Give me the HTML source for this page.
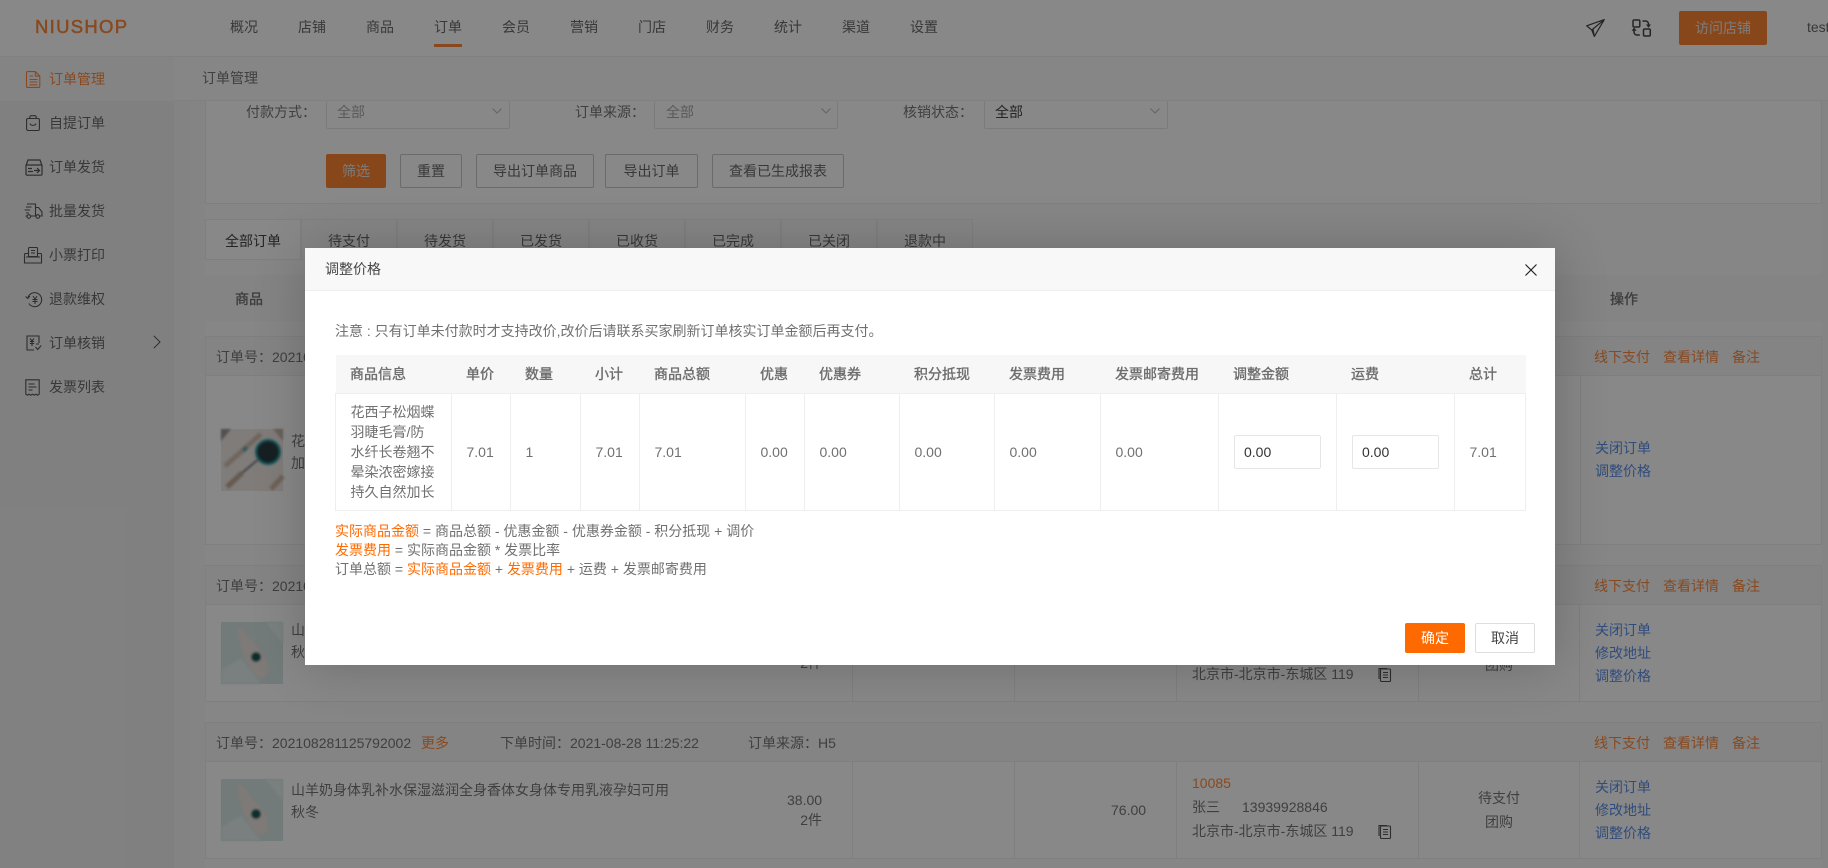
<!DOCTYPE html>
<html lang="zh">
<head>
<meta charset="utf-8">
<title>订单管理</title>
<style>
*{box-sizing:border-box}
html,body{margin:0;padding:0;width:1828px;height:868px;overflow:hidden;background:#fff}
body{position:relative;font-family:"Liberation Sans","Noto Sans CJK SC",sans-serif;font-size:14px;color:#777}
.a{position:absolute}
.t{position:absolute;line-height:20px;height:20px;white-space:nowrap;color:#777}
.c{font-family:"Noto Sans CJK TC",sans-serif}
.nav{top:17px;color:#6a6a6a}
.side{left:49px;color:#6a6a6a}
.sel{position:absolute;top:90px;height:39px;width:184px;border:1px solid #e6e6e6;border-radius:2px;background:#fff}
.btn{position:absolute;top:154px;height:34px;line-height:32px;text-align:center;border:1px solid #c9c9c9;border-radius:2px;color:#6a6a6a;background:#fff}
.tab{position:absolute;top:219px;height:41px;width:96px;line-height:42px;text-align:center;border:1px solid #eee;margin-left:-1px;background:#f9f9f9;color:#6a6a6a}
.ord{position:absolute;left:205px;width:1617px;border:1px solid #eee;background:#fff}
.ordh{position:absolute;left:205px;width:1617px;height:40px;background:#f8f8f8;border:1px solid #eee}
.v{position:absolute;width:1px;background:#eee}
.or{color:#ff8a3c}
.t.or{color:#ff8a3c}
.t.bl{color:#5b8fe8}
#md .or{color:#ff6a00}
#ov{position:absolute;left:0;top:0;width:1828px;height:868px;background:rgba(0,0,0,.467)}
#md{position:absolute;left:305px;top:248px;width:1250px;height:417px;background:#fff;box-shadow:1px 1px 50px rgba(0,0,0,.2)}
#mh{position:absolute;left:0;top:0;width:1250px;height:43px;background:#f8f8f8;border-bottom:1px solid #eee}
table{position:absolute;left:30px;top:107px;border-collapse:collapse;table-layout:fixed;width:1190px;color:#707070}
th{height:38px;background:#f7f7f7;text-align:left;padding:0 0 0 14.5px;font-weight:400;-webkit-text-stroke:.35px #666;white-space:nowrap}
td{height:117px;border:1px solid #eee;padding:0 0 0 14.5px;line-height:20px;vertical-align:middle;white-space:nowrap}
.ipt{width:87px;height:34px;margin-left:.5px;border:1px solid #e6e6e6;border-radius:2px;line-height:32px;padding-left:9px;color:#333}
svg{position:absolute;overflow:visible}
</style>
</head>
<body>
<!-- top nav -->
<div class="a" style="left:0;top:0;width:1828px;height:57px;background:#fff;border-bottom:1px solid #f1f1f1"></div>
<div class="t" style="left:35px;top:17px;font-size:18.500px;letter-spacing:1.300px;color:#ff8a3c;-webkit-text-stroke:.5px #ff8a3c">NIUSHOP</div>
<div class="t nav" style="left:230px">概况</div>
<div class="t nav" style="left:298px">店铺</div>
<div class="t nav" style="left:366px">商品</div>
<div class="t nav" style="left:434px">订单</div>
<div class="t nav" style="left:502px">会员</div>
<div class="t nav" style="left:570px">营销</div>
<div class="t nav" style="left:638px">门店</div>
<div class="t nav" style="left:706px">财务</div>
<div class="t nav" style="left:774px">统计</div>
<div class="t nav" style="left:842px">渠道</div>
<div class="t nav" style="left:910px">设置</div>
<div class="a" style="left:434px;top:44px;width:28px;height:3px;background:#ff8a3c"></div>
<svg style="left:1586px;top:19px" width="19" height="18" viewBox="0 0 19 18" fill="none" stroke="#444" stroke-width="1.200" stroke-linejoin="round"><path d="M18.300.6 .7 6.800 5.800 11 8.300 17.400 18.300.6ZM18.300.6 5.800 11M8.300 17.400 7 10.200"/></svg>
<svg style="left:1632px;top:19px" width="19" height="18" viewBox="0 0 19 18" fill="none" stroke="#444" stroke-width="1.500"><rect x="1" y="1" width="6.800" height="7" rx="1.200"/><rect x="11.500" y="10" width="6.800" height="7" rx="1.200"/><path d="M10.500 2h3a3 3 0 0 1 3 3v2M7.800 16H5a3 3 0 0 1-3-3v-2"/><path d="M14 5.500h5l-2.500 3.300ZM-.4 11.800h5l-2.500-3.300Z" fill="#444" stroke="none"/></svg>
<div class="a" style="left:1679px;top:11px;width:88px;height:34px;line-height:34px;text-align:center;background:#ff8533;border-radius:2px;color:#e8e8e8">访问店铺</div>
<div class="t" style="left:1807px;top:17px;color:#6a6a6a">test</div>

<!-- sidebar -->
<div class="a" style="left:0;top:57px;width:174px;height:811px;background:#f1f1f1"></div>
<div class="a" style="left:0;top:57px;width:174px;height:44px;background:#f8f8f8"></div>
<div class="a" style="left:174px;top:101px;width:16px;height:767px;background:#f5f5f5"></div>
<div class="a" style="left:190px;top:101px;width:15px;height:767px;background:#f8f8f8"></div>
<div class="a" style="left:1822px;top:101px;width:6px;height:767px;background:#f8f8f8"></div>
<div class="a" style="left:205px;top:204px;width:1617px;height:664px;background:#fcfcfc"></div>

<svg style="left:26px;top:71px" width="15" height="17" viewBox="0 0 15 17" fill="none" stroke="#ff8a3c" stroke-width="1.100"><path d="M1.500.6h7.800l4.500 4.500v10.300a1 1 0 0 1-1 1H1.500a1 1 0 0 1-1-1V1.600a1 1 0 0 1 1-1ZM9.300.6v4.500h4.500M3.500 5h3.500M3.500 8.500h8M3.500 11h8M3.500 13.800h8"/></svg>
<div class="t side or" style="top:69px">订单管理</div>
<svg style="left:26px;top:115px" width="14" height="16" viewBox="0 0 14 16" fill="none" stroke="#555" stroke-width="1.100"><rect x=".6" y="3.500" width="12.800" height="12" rx="1.500"/><path d="M3.800 3.500V2a1.300 1.300 0 0 1 1.300-1.300h3.800A1.300 1.300 0 0 1 10.200 2v1.500M4 8.500c.8 2.500 5.200 2.500 6 0"/></svg>
<div class="t side" style="top:113px">自提订单</div>
<svg style="left:25px;top:159px" width="18" height="17" viewBox="0 0 18 17" fill="none" stroke="#555" stroke-width="1.200"><path d="M1 6.500 3 1h12l2 5.500V15a1.200 1.200 0 0 1-1.200 1.200H2.200A1.200 1.200 0 0 1 1 15ZM1 6h16M3 9.500h4M3 12.500h5M9 11.500h5M12 9l2.500 2.500L12 14"/></svg>
<div class="t side" style="top:157px">订单发货</div>
<svg style="left:24px;top:203px" width="19" height="16" viewBox="0 0 19 16" fill="none" stroke="#555" stroke-width="1.100"><path d="M3 1h8.500v11.500M11.500 4.500h3l3.500 4.500v4h-2M11.500 13h-5M3 13H1.500M2 4h5.500M.6 7h5.500M2 10h3"/><circle cx="4.800" cy="13.500" r="1.800"/><circle cx="13.800" cy="13.500" r="1.800"/></svg>
<div class="t side" style="top:201px">批量发货</div>
<svg style="left:24px;top:247px" width="18" height="17" viewBox="0 0 18 17" fill="none" stroke="#555" stroke-width="1.100"><path d="M4.500 6.500H1.500a1 1 0 0 0-1 1v8.500h17V7.500a1 1 0 0 0-1-1h-3"/><path d="M4.500 9.500V1.500a1 1 0 0 1 1-1h7a1 1 0 0 1 1 1v8ZM2 10h14M7 3.500h4M7 6h4"/></svg>
<div class="t side" style="top:245px">小票打印</div>
<svg style="left:25px;top:292px" width="18" height="16" viewBox="0 0 18 16" fill="none" stroke="#555" stroke-width="1.100"><path d="M3 5.500A7 7 0 1 1 3.800 11.500M.6 4.500l2.200 2 2-2.500"/><path d="M8 4l2 3 2-3M7.500 7.500h5M7.500 9.500h5M10 7v5" stroke-width="1"/></svg>
<div class="t side" style="top:289px">退款维权</div>
<svg style="left:26px;top:335px" width="16" height="16" viewBox="0 0 16 16" fill="none" stroke="#555" stroke-width="1.100"><path d="M13 8V1H1v14h7"/><path d="M4 3.500l2 2.500 2-2.500M3.800 6.500h4.400M3.800 8.500h4.400M6 6v5M10 9h3M9.500 12l2.200 2.500 3.500-4"/></svg>
<div class="t side" style="top:333px">订单核销</div>
<svg style="left:153px;top:335px" width="8" height="14" viewBox="0 0 8 14" fill="none" stroke="#555" stroke-width="1"><path d="M.8.800 7 7 .8 13.200"/></svg>
<svg style="left:25px;top:379px" width="15" height="17" viewBox="0 0 15 17" fill="none" stroke="#555" stroke-width="1.100"><path d="M.8.800h13.400v14.400l-1.700 1-1.600-1-1.700 1-1.700-1-1.700 1-1.700-1-1.600 1-1.700-1Z"/><path d="M3.500 5h6M3.500 8h8M3.500 11h4"/></svg>
<div class="t side" style="top:377px">发票列表</div>

<!-- breadcrumb bar -->
<div class="a" style="left:174px;top:57px;width:1654px;height:44px;background:#fbfbfb;border-bottom:1px solid #f1f1f1"></div>
<div class="t" style="left:202px;top:68px">订单管理</div>

<!-- filter -->
<div class="a" style="left:205px;top:101px;width:1617px;height:103px;border:1px solid #eee;border-top:0;background:#fff"></div>
<div class="t" style="left:246px;top:102px">付款方式<span class="c">：</span></div>
<div class="sel" style="left:326px;top:101px;height:28px;border-top:0"></div>
<div class="t" style="left:337px;top:102px;color:#aaa">全部</div>
<svg style="left:492px;top:108px" width="10" height="6" viewBox="0 0 10 6" fill="none" stroke="#bbb"><path d="M.5.500 5 5 9.500.5"/></svg>
<div class="t" style="left:575px;top:102px">订单来源<span class="c">：</span></div>
<div class="sel" style="left:654px;top:101px;height:28px;border-top:0"></div>
<div class="t" style="left:666px;top:102px;color:#aaa">全部</div>
<svg style="left:821px;top:108px" width="10" height="6" viewBox="0 0 10 6" fill="none" stroke="#bbb"><path d="M.5.500 5 5 9.500.5"/></svg>
<div class="t" style="left:903px;top:102px">核销状态<span class="c">：</span></div>
<div class="sel" style="left:984px;top:101px;height:28px;border-top:0"></div>
<div class="t" style="left:995px;top:102px;color:#444">全部</div>
<svg style="left:1150px;top:108px" width="10" height="6" viewBox="0 0 10 6" fill="none" stroke="#bbb"><path d="M.5.500 5 5 9.500.5"/></svg>
<div class="btn" style="left:326px;width:60px;background:#ff8533;border-color:#ff8533;color:#e8e8e8">筛选</div>
<div class="btn" style="left:400px;width:62px">重置</div>
<div class="btn" style="left:476px;width:118px">导出订单商品</div>
<div class="btn" style="left:605px;width:93px">导出订单</div>
<div class="btn" style="left:712px;width:132px">查看已生成报表</div>

<!-- tabs -->
<div class="tab" style="left:206px;background:#fff;color:#444">全部订单</div>
<div class="tab" style="left:302px">待支付</div>
<div class="tab" style="left:398px">待发货</div>
<div class="tab" style="left:494px">已发货</div>
<div class="tab" style="left:590px">已收货</div>
<div class="tab" style="left:686px">已完成</div>
<div class="tab" style="left:782px">已关闭</div>
<div class="tab" style="left:878px">退款中</div>

<!-- table head -->
<div class="a" style="left:205px;top:275px;width:1617px;height:46px;background:#f7f7f7"></div>
<div class="t" style="left:235px;top:289px;-webkit-text-stroke:.3px #666">商品</div>
<div class="t" style="left:1610px;top:289px;-webkit-text-stroke:.3px #666">操作</div>

<!-- image filter -->
<svg width="0" height="0" style="left:0;top:0"><defs><filter id="b" x="-5%" y="-5%" width="110%" height="110%"><feGaussianBlur stdDeviation="1"/></filter></defs></svg>

<!-- order 1 -->
<div class="ord" style="top:336px;height:209px"></div>
<div class="ordh" style="top:336px"></div>
<div class="t" style="left:216px;top:347px">订单号<span class="c">：</span>202108281125792002</div>
<div class="t or" style="left:1594px;top:347px">线下支付</div>
<div class="t or" style="left:1663px;top:347px">查看详情</div>
<div class="t or" style="left:1732px;top:347px">备注</div>
<div class="v" style="left:1580px;top:376px;height:168px"></div>
<svg style="left:221px;top:429px" width="62" height="62" viewBox="0 0 62 62"><rect width="62" height="62" fill="#eee8e4"/><g filter="url(#b)"><path d="M4 37 40 5" stroke="#d4c0b0" stroke-width="5"/><path d="M22 22 26 18" stroke="#5cabac" stroke-width="4"/><path d="M6 58 21 44" stroke="#bfa896" stroke-width="5"/><path d="M21 44 40 28" stroke="#666" stroke-width="1.500"/><circle cx="47" cy="23" r="12" fill="#2a3c40"/><circle cx="47" cy="23" r="12" fill="none" stroke="#2aa3a8" stroke-width="2"/><path d="M50 60 62 47" stroke="#d0b8a4" stroke-width="5"/><path d="M52 0h10v12Z" fill="#c4b4a8"/><path d="M0 0h10L0 12Z" fill="#999"/></g></svg>
<div class="t" style="left:291px;top:431px">花西子松烟蝶羽睫毛膏</div>
<div class="t" style="left:291px;top:453px">加长</div>
<div class="t bl" style="left:1595px;top:438px">关闭订单</div>
<div class="t bl" style="left:1595px;top:461px">调整价格</div>

<!-- order 2 -->
<div class="ord" style="top:565px;height:137px"></div>
<div class="ordh" style="top:565px"></div>
<div class="t" style="left:216px;top:576px">订单号<span class="c">：</span>202108281125792002</div>
<div class="t or" style="left:1594px;top:576px">线下支付</div>
<div class="t or" style="left:1663px;top:576px">查看详情</div>
<div class="t or" style="left:1732px;top:576px">备注</div>
<div class="v" style="left:852px;top:605px;height:96px"></div>
<div class="v" style="left:1014px;top:605px;height:96px"></div>
<div class="v" style="left:1176px;top:605px;height:96px"></div>
<div class="v" style="left:1418px;top:605px;height:96px"></div>
<div class="v" style="left:1579px;top:605px;height:96px"></div>
<svg style="left:221px;top:622px" width="62" height="62" viewBox="0 0 62 62"><rect width="62" height="62" fill="#d6e4e4"/><g filter="url(#b)"><path d="M0 48 20 36 40 62H0ZM44 0l18 22V0Z" fill="#e4efef"/><path d="M17 5C22 5 26 12 30 18 38 26 46 34 47 45 48 54 42 58 36 55 30 50 22 34 19 22 17 14 15 8 17 5Z" fill="#ece4e0"/><circle cx="35" cy="35" r="5" fill="#0e5d56"/></g></svg>
<div class="t" style="left:291px;top:620px">山羊奶身体乳补水保湿滋润全身香体女身体专用乳液孕妇可用</div>
<div class="t" style="left:291px;top:642px">秋冬</div>
<div class="t" style="left:787px;top:653px;width:35px;text-align:right">2件</div>
<div class="t" style="left:1192px;top:664px">北京市-北京市-东城区 119</div>
<svg style="left:1378px;top:667px" width="13" height="15" viewBox="0 0 13 15" fill="none" stroke="#555" stroke-width="1.100"><rect x="2.500" y="2" width="10" height="12.500" rx="1"/><path d="M1 12V1.500h8M5 5.500h5M5 8h5M5 10.500h5"/></svg>
<div class="t" style="left:1485px;top:655px">团购</div>
<div class="t bl" style="left:1595px;top:620px">关闭订单</div>
<div class="t bl" style="left:1595px;top:643px">修改地址</div>
<div class="t bl" style="left:1595px;top:666px">调整价格</div>

<!-- order 3 -->
<div class="ord" style="top:722px;height:137px"></div>
<div class="ordh" style="top:722px"></div>
<div class="t" style="left:216px;top:733px">订单号<span class="c">：</span>202108281125792002</div>
<div class="t or" style="left:421px;top:733px">更多</div>
<div class="t" style="left:500px;top:733px">下单时间<span class="c">：</span>2021-08-28 11:25:22</div>
<div class="t" style="left:748px;top:733px">订单来源<span class="c">：</span>H5</div>
<div class="t or" style="left:1594px;top:733px">线下支付</div>
<div class="t or" style="left:1663px;top:733px">查看详情</div>
<div class="t or" style="left:1732px;top:733px">备注</div>
<div class="v" style="left:852px;top:762px;height:96px"></div>
<div class="v" style="left:1014px;top:762px;height:96px"></div>
<div class="v" style="left:1176px;top:762px;height:96px"></div>
<div class="v" style="left:1418px;top:762px;height:96px"></div>
<div class="v" style="left:1579px;top:762px;height:96px"></div>
<svg style="left:221px;top:779px" width="62" height="62" viewBox="0 0 62 62"><rect width="62" height="62" fill="#d6e4e4"/><g filter="url(#b)"><path d="M0 48 20 36 40 62H0ZM44 0l18 22V0Z" fill="#e4efef"/><path d="M17 5C22 5 26 12 30 18 38 26 46 34 47 45 48 54 42 58 36 55 30 50 22 34 19 22 17 14 15 8 17 5Z" fill="#ece4e0"/><circle cx="35" cy="35" r="5" fill="#0e5d56"/></g></svg>
<div class="t" style="left:291px;top:780px">山羊奶身体乳补水保湿滋润全身香体女身体专用乳液孕妇可用</div>
<div class="t" style="left:291px;top:802px">秋冬</div>
<div class="t" style="left:787px;top:790px;width:35px;text-align:right">38.00</div>
<div class="t" style="left:787px;top:810px;width:35px;text-align:right">2件</div>
<div class="t" style="left:1111px;top:800px">76.00</div>
<div class="t or" style="left:1192px;top:773px">10085</div>
<div class="t" style="left:1192px;top:797px">张三</div>
<div class="t" style="left:1242px;top:797px">13939928846</div>
<div class="t" style="left:1192px;top:821px">北京市-北京市-东城区 119</div>
<svg style="left:1378px;top:824px" width="13" height="15" viewBox="0 0 13 15" fill="none" stroke="#555" stroke-width="1.100"><rect x="2.500" y="2" width="10" height="12.500" rx="1"/><path d="M1 12V1.500h8M5 5.500h5M5 8h5M5 10.500h5"/></svg>
<div class="t" style="left:1478px;top:788px">待支付</div>
<div class="t" style="left:1485px;top:812px">团购</div>
<div class="t bl" style="left:1595px;top:777px">关闭订单</div>
<div class="t bl" style="left:1595px;top:800px">修改地址</div>
<div class="t bl" style="left:1595px;top:823px">调整价格</div>

<div id="ov"></div>

<!-- modal -->
<div id="md">
  <div id="mh"></div>
  <div class="t" style="left:20px;top:11px;color:#444">调整价格</div>
  <svg style="left:1220px;top:16px" width="12" height="12" viewBox="0 0 12 12" fill="none" stroke="#222" stroke-width="1.200"><path d="M.5.500l11 11M11.500.5l-11 11"/></svg>
  <div class="t" style="left:30px;top:73px;color:#707070">注意 : 只有订单未付款时才支持改价,改价后请联系买家刷新订单核实订单金额后再支付。</div>
  <table>
    <colgroup><col style="width:116px"><col style="width:59px"><col style="width:70px"><col style="width:59px"><col style="width:106px"><col style="width:59px"><col style="width:95px"><col style="width:95px"><col style="width:106px"><col style="width:118px"><col style="width:118px"><col style="width:118px"><col style="width:71px"></colgroup>
    <tr><th>商品信息</th><th>单价</th><th>数量</th><th>小计</th><th>商品总额</th><th>优惠</th><th>优惠券</th><th>积分抵现</th><th>发票费用</th><th>发票邮寄费用</th><th>调整金额</th><th>运费</th><th>总计</th></tr>
    <tr><td>花西子松烟蝶<br>羽睫毛膏/防<br>水纤长卷翘不<br>晕染浓密嫁接<br>持久自然加长</td><td>7.01</td><td>1</td><td>7.01</td><td>7.01</td><td>0.00</td><td>0.00</td><td>0.00</td><td>0.00</td><td>0.00</td><td><div class="ipt">0.00</div></td><td><div class="ipt">0.00</div></td><td>7.01</td></tr>
  </table>
  <div class="t" style="left:30px;top:273px;color:#707070"><span class="or">实际商品金额</span> = 商品总额 - 优惠金额 - 优惠券金额 - 积分抵现 + 调价</div>
  <div class="t" style="left:30px;top:292px;color:#707070"><span class="or">发票费用</span> = 实际商品金额 * 发票比率</div>
  <div class="t" style="left:30px;top:311px;color:#707070">订单总额 = <span class="or">实际商品金额</span> + <span class="or">发票费用</span> + 运费 + 发票邮寄费用</div>
  <div class="a" style="left:1100px;top:375px;width:60px;height:30px;line-height:30px;text-align:center;background:#ff6a00;color:#fff;border-radius:2px">确定</div>
  <div class="a" style="left:1170px;top:375px;width:60px;height:30px;line-height:28px;text-align:center;background:#fff;color:#444;border:1px solid #dedede;border-radius:2px">取消</div>
</div>
</body>
</html>
